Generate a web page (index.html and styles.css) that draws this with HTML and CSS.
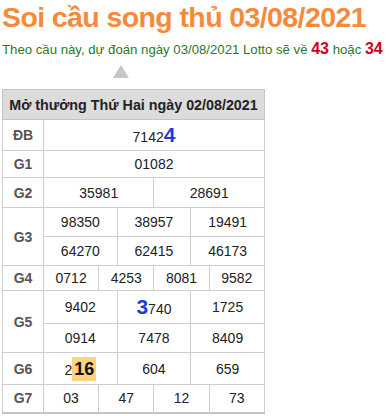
FILE: index.html
```html
<!DOCTYPE html>
<html lang="vi">
<head>
<meta charset="utf-8">
<link rel="stylesheet" href="styles.css">
</head>
<body>
<h1 class="title">Soi cầu song thủ 03/08/2021</h1>
<p class="lead">Theo cầu này, dự đoán ngày 03/08/2021 Lotto sẽ về <b class="red">43</b> hoặc <b class="red">34</b></p>
<div class="arrow-row"><span class="arrow"></span></div>
<table class="kq">
  <colgroup>
    <col class="c-lbl">
    <col><col><col><col><col><col><col><col><col><col><col><col>
  </colgroup>
  <tr class="r-head"><th colspan="13">Mở thưởng Thứ Hai ngày 02/08/2021</th></tr>
  <tr class="r-db"><td class="lbl">ĐB</td><td colspan="12">7142<b class="blue">4</b></td></tr>
  <tr class="r-g1"><td class="lbl">G1</td><td colspan="12">01082</td></tr>
  <tr class="r-g2"><td class="lbl">G2</td><td colspan="6">35981</td><td colspan="6">28691</td></tr>
  <tr class="r-g3"><td class="lbl" rowspan="2">G3</td><td colspan="4">98350</td><td colspan="4">38957</td><td colspan="4">19491</td></tr>
  <tr class="r-g3"><td colspan="4">64270</td><td colspan="4">62415</td><td colspan="4">46173</td></tr>
  <tr class="r-g4"><td class="lbl">G4</td><td colspan="3">0712</td><td colspan="3">4253</td><td colspan="3">8081</td><td colspan="3">9582</td></tr>
  <tr class="r-g5a"><td class="lbl" rowspan="2">G5</td><td colspan="4">9402</td><td colspan="4"><b class="blue">3</b>740</td><td colspan="4">1725</td></tr>
  <tr class="r-g5b"><td colspan="4">0914</td><td colspan="4">7478</td><td colspan="4">8409</td></tr>
  <tr class="r-g6"><td class="lbl">G6</td><td colspan="4">2<b class="hl">16</b></td><td colspan="4">604</td><td colspan="4">659</td></tr>
  <tr class="r-g7"><td class="lbl">G7</td><td colspan="3">03</td><td colspan="3">47</td><td colspan="3">12</td><td colspan="3">73</td></tr>
</table>
</body>
</html>
```
FILE: styles.css
```css
* { box-sizing: border-box; }
body {
  margin: 0;
  padding: 0 2px;
  font-family: "Liberation Sans", Arial, sans-serif;
  background: #fff;
  color: #222;
}
.title {
  margin: 0;
  padding-top: 1px;
  font-size: 28.5px;
  line-height: 33px;
  letter-spacing: -0.6px;
  font-weight: bold;
  color: #f68a3b;
  white-space: nowrap;
}
.lead {
  margin: 6px 0 0;
  font-size: 13.2px;
  line-height: 18px;
  color: #2a7a2a;
  white-space: nowrap;
}
.red { color: #d0021b; font-size: 16px; }
.arrow-row { height: 30px; padding-left: 111px; padding-top: 6px; }
.arrow {
  display: block;
  width: 0; height: 0;
  border-left: 8px solid transparent;
  border-right: 8px solid transparent;
  border-bottom: 13px solid #c6c6c6;
}
.kq {
  width: 263px;
  border-collapse: collapse;
  table-layout: fixed;
  border-bottom: 2px solid #c4c4c4;
  font-size: 14px;
}
.c-lbl { width: 41px; }
.kq th, .kq td {
  border: 1px solid #cfcfcf;
  text-align: center;
  padding: 0;
  color: #222;
}
.kq th {
  background: #dcdcdc;
  height: 30px;
  font-weight: bold;
  font-size: 14.3px;
  color: #222;
  border-color: #c4c4c4;
  white-space: nowrap;
}
.kq td.lbl { font-weight: bold; color: #555; }
.r-db td { height: 31px; }
.r-g1 td { height: 27px; }
.r-g2 td { height: 30px; }
.r-g3 td { height: 29px; }
.r-g4 td { height: 25px; }
.r-g5a td { height: 33px; }
.r-g5b td { height: 29px; }
.r-g6 td { height: 32px; }
.r-g7 td { height: 28px; }
.blue { color: #1a3fd6; font-size: 21px; }
.hl {
  display: inline-block;
  background: #ffd27f;
  font-size: 18px;
  line-height: 24px;
  padding: 0 2px;
  color: #111;
}
```
